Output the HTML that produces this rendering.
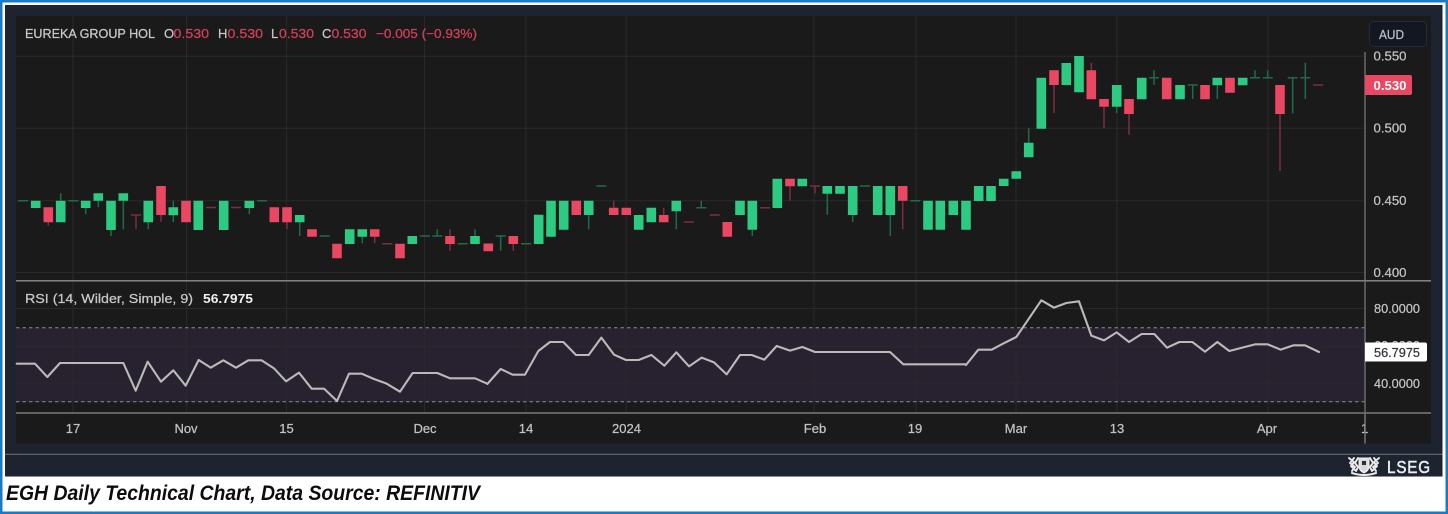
<!DOCTYPE html>
<html>
<head>
<meta charset="utf-8">
<style>
html,body{margin:0;padding:0;width:1448px;height:514px;overflow:hidden;background:#fff}
svg{display:block}
text{font-family:"Liberation Sans",sans-serif}
.w{stroke:currentColor;stroke-width:.25px}
</style>
</head>
<body>
<svg width="1448" height="514" viewBox="0 0 1448 514" xmlns="http://www.w3.org/2000/svg">
<rect width="1448" height="514" fill="#fff"/>
<rect x="1.25" y="1.25" width="1445.5" height="511.5" fill="none" stroke="#1a7ac6" stroke-width="2.5"/>
<g style="filter:blur(.35px)">
<rect x="5" y="5" width="1437.5" height="471.5" fill="#1e2330"/>
<rect x="5" y="476" width="1437.5" height="1" fill="#8a8d94"/>
<rect x="16" y="16" width="1415" height="427.5" fill="#1a1a1a"/>
<rect x="5" y="453.7" width="1437.5" height="1.3" fill="#5d616b"/>
<!-- RSI band -->
<rect x="16" y="328" width="1349" height="74" fill="#282130"/>
<!-- grid -->
<path d="M73 16V413M186.5 16V413M286.5 16V413M424.5 16V413M526 16V413M626 16V413M814 16V413M916 16V413M1016 16V413M1117 16V413M1268 16V413M16 56.3H1365M16 128.3H1365M16 200.7H1365M16 272.5H1365M16 308.5H1365M16 346.5H1365M16 383H1365" stroke="#292929" stroke-width="1" fill="none"/>
<path d="M16 327.7H1365M16 401.7H1365" stroke="#8e8b92" stroke-width="1" stroke-dasharray="3.5 3" fill="none"/>
<path d="M16 280.8H1431M16 413H1431" stroke="#8e8e8e" stroke-width="1.3" fill="none"/>
<path d="M1365 52V443.5" stroke="#777" stroke-width="1.3" fill="none"/>

<!-- wicks -->
<path fill="none" stroke="#1f6a4a" stroke-width="1.5" d="M60.7 193.3V200.7M85.7 208V214.3M98.3 200.7V207.3M111 230V236M123.3 200.7V229.3M148.3 222V229.3M173.3 200.7V222M249.3 208V214.3M299.7 222V236M362.3 236V243.3M437.3 229.3V236M475 229.3V236M500.7 236V250.7M701.3 200.7V207.7M1154 70.3V85M1192.7 85V99M1255 70.3V77.7M1267.7 70.3V77.7M1292.7 77.7V113.3M1305.3 62.7V99M588.7 215V229.3M676.3 211V229.3M752.3 229.7V236M827.3 193.7V214.7M852.7 215V222M890.3 215V236M1028.7 128.3V142.7M1116.7 106.7V113.3M1217.3 85.3V99"/>
<path fill="none" stroke="#7c2d42" stroke-width="1.5" d="M48.3 222.3V225.7M136 215V229.3M161 215V222M287 222.3V229.3M374.7 236.7V243.3M450 229.3V236M450 244V250.7M513.3 244V250.7M613.7 200.7V207.7M663.7 207.7V215M790 186.3V200.7M815 186V193.3M902.7 200.7V229.3M1054 85V113.3M1091.3 62.7V70.3M1104 106.7V128.3M1129 114V134.7M1280 114V171"/>
<!-- dojis -->
<path fill="none" stroke="#1f6a4a" stroke-width="1.5" d="M18 200.7h10M68.3 200.7h10M257 200.7h10M319.7 236h10M420 236h10M432.3 236h10M457.7 243.7h10M495.7 236h10M521 243.7h10M596.3 186h10M696.3 207.7h10M860 186h10M910.3 200.7h10M1149 77.7h10M1187.7 85h10M1250 77.7h10M1262.7 77.7h10M1287.7 77.7h10M1300.3 77.7h10"/>
<path fill="none" stroke="#7c2d42" stroke-width="1.5" d="M131 215h10M206 207.5h10M231 207.5h10M382.3 243.7h10M684 222h10M709.7 215h10M760 207.7h10M810 186h10M1313 85h10"/>
<!-- green bodies -->
<path fill="none" stroke="#2dcb82" stroke-width="9.6" d="M35.7 200.7V208M60.7 200.7V222.3M85.7 200.7V208M98.3 193.3V200.7M111 200.7V230M123.3 193.3V200.7M148.3 200.7V222.3M173.3 207.3V215.3M198.3 200.7V230M223.7 200.7V230M249.3 200.7V208M299.7 215V222.3M349.7 229.3V244M362.3 229.3V236.7M412.3 236V244M475 236V244M538.7 214.7V244M551 200.7V236.7M563.7 200.7V229.7M588.7 200.7V215M638.7 215V229.7M651.3 207.7V222.3M676.3 200.7V211.3M740 200.7V215M752.3 200.7V229.7M777.3 178.7V208M802.3 178.7V186.3M827.3 186V193.7M840 186V193.7M852.7 186V215M877.7 186V215M890.3 186V215M928 200.7V229.7M940.3 200.7V229.7M953.3 200.7V215M966 200.7V229.7M978.7 186V201M991 186V201M1003.7 178.7V186M1016.3 171.3V178.7M1028.7 142.7V157.3M1041.3 77.7V128.7M1066.3 63V85M1079 56V92.3M1116.7 85V106.7M1141.7 77.7V99.3M1180 85V99.3M1217.3 77.7V85.3M1242.7 77.7V85.3"/>
<!-- red bodies -->
<path fill="none" stroke="#ea4763" stroke-width="9.6" d="M48.3 207.3V222.3M161 186V215M186 200.7V222.3M274.3 207.3V222.3M287 207.3V222.3M312 229.3V236.7M337 243.7V258.3M374.7 229.3V236.7M400 243.7V258.3M450 236V244M488.3 243.5V251.3M513.3 236V244M576.3 200.7V215M613.7 207.7V215M626.3 207.7V215M663.7 215V222.3M727.3 222V236.7M790 178.7V186.3M902.7 186V200.7M1054 70.3V85M1091.3 70.3V99.3M1104 99V106.7M1129 99V114M1166.7 77.7V99.3M1205 85V99.3M1230 77.7V92.7M1280 85V114"/>

<!-- RSI line -->
<g fill="none" stroke="#bababa" stroke-width="6.3" stroke-linejoin="round" stroke-linecap="round">
<path transform="translate(0,275) scale(.33333)" d="M50 266L105 266L142 306L180 264L370 264L407 347L443 260L483 320L520 286L557 332L596 255L632 278L670 256L708 278L745 256L785 256L822 280L858 319L897 293L935 341L972 341L1011 378L1047 296L1085 296L1122 312L1160 326L1200 350L1238 294L1312 294L1350 310L1425 310L1462 326"/>
<path transform="translate(480,275) scale(.33333)" d="M22 327L62 282L98 299L135 299L175 228L210 201L250 201L288 240L326 240L364 188L402 239L438 255L476 255L514 240L553 272L589 232L627 274L665 248L702 262L740 298L780 240L815 240L853 254L890 213L930 227L967 216L1005 231L1230 231L1270 268L1455 268"/>
<path transform="translate(960,275) scale(.33333)" d="M15 268L18 270L55 224L95 224L131 205L169 186L244 76L282 98L319 84L357 79L394 182L432 196L470 172L507 201L545 177L583 177L621 218L658 201L697 201L735 230L772 201L808 228L847 218L885 208L923 208L962 224L1000 211L1035 211L1077 231"/>
</g>

<!-- header -->
<g font-size="13">
<text class="w" x="25" y="38" fill="#c8c8c8" color="#c8c8c8" textLength="130" lengthAdjust="spacingAndGlyphs">EUREKA GROUP HOL</text>
<text class="w" x="164" y="38" fill="#c8c8c8" color="#c8c8c8">O</text><text class="w" x="173.500" y="38" fill="#cf405a" color="#cf405a" textLength="35.500" lengthAdjust="spacingAndGlyphs">0.530</text>
<text class="w" x="218" y="38" fill="#c8c8c8" color="#c8c8c8">H</text><text class="w" x="227.500" y="38" fill="#cf405a" color="#cf405a" textLength="35.500" lengthAdjust="spacingAndGlyphs">0.530</text>
<text class="w" x="271" y="38" fill="#c8c8c8" color="#c8c8c8">L</text><text class="w" x="279" y="38" fill="#cf405a" color="#cf405a" textLength="35" lengthAdjust="spacingAndGlyphs">0.530</text>
<text class="w" x="322" y="38" fill="#c8c8c8" color="#c8c8c8">C</text><text class="w" x="331.500" y="38" fill="#cf405a" color="#cf405a" textLength="35" lengthAdjust="spacingAndGlyphs">0.530</text>
<text class="w" x="376" y="38" fill="#cf405a" color="#cf405a" textLength="101" lengthAdjust="spacingAndGlyphs">−0.005 (−0.93%)</text>
<text class="w" x="25" y="303" fill="#c8c8c8" color="#c8c8c8" textLength="168" lengthAdjust="spacingAndGlyphs">RSI (14, Wilder, Simple, 9)</text>
<text x="203" y="303" fill="#f0f0f0" font-weight="bold" textLength="50" lengthAdjust="spacingAndGlyphs">56.7975</text>
</g>

<!-- AUD -->
<rect x="1369.5" y="21.5" width="57" height="25" rx="4" fill="#131722" stroke="#262b38"/>
<text class="w" x="1379" y="39" font-size="13" fill="#bcbec6" color="#bcbec6" textLength="25" lengthAdjust="spacingAndGlyphs">AUD</text>

<!-- price axis -->
<g font-size="13" fill="#c2c2c2" color="#c2c2c2">
<text class="w" x="1373.5" y="60.5" textLength="33" lengthAdjust="spacingAndGlyphs">0.550</text>
<text class="w" x="1373.5" y="132.5" textLength="33" lengthAdjust="spacingAndGlyphs">0.500</text>
<text class="w" x="1373.5" y="205" textLength="33" lengthAdjust="spacingAndGlyphs">0.450</text>
<text class="w" x="1373.5" y="277" textLength="33" lengthAdjust="spacingAndGlyphs">0.400</text>
<text class="w" x="1374" y="313" textLength="46" lengthAdjust="spacingAndGlyphs">80.0000</text>
<text class="w" x="1374" y="350" textLength="46" lengthAdjust="spacingAndGlyphs">60.0000</text>
<text class="w" x="1374" y="388" textLength="46" lengthAdjust="spacingAndGlyphs">40.0000</text>
</g>
<path d="M1365 75h45a2 2 0 0 1 2 2v16a2 2 0 0 1-2 2h-45z" fill="#ea4763"/>
<text x="1373.5" y="90" font-size="13" font-weight="bold" fill="#fff" textLength="33" lengthAdjust="spacingAndGlyphs">0.530</text>
<path d="M1365 342.5h60a2 2 0 0 1 2 2v15a2 2 0 0 1-2 2h-60z" fill="#fff"/>
<text class="w" x="1374" y="357" font-size="13" fill="#33363d" color="#33363d" textLength="46" lengthAdjust="spacingAndGlyphs">56.7975</text>

<!-- time axis -->
<g font-size="13" fill="#c2c2c2" color="#c2c2c2" text-anchor="middle">
<text class="w" x="73" y="433">17</text>
<text class="w" x="186" y="433">Nov</text>
<text class="w" x="286.5" y="433">15</text>
<text class="w" x="425" y="433">Dec</text>
<text class="w" x="526" y="433">14</text>
<text class="w" x="626.500" y="433">2024</text>
<text class="w" x="815" y="433">Feb</text>
<text class="w" x="915" y="433">19</text>
<text class="w" x="1016" y="433">Mar</text>
<text class="w" x="1117" y="433">13</text>
<text class="w" x="1267" y="433">Apr</text>
</g>
<text class="w" x="1361" y="433" font-size="13" fill="#c2c2c2" color="#c2c2c2">1</text>
<path d="M1365 415V443.5" stroke="#777" stroke-width="1.3" fill="none"/>

<!-- LSEG crest -->
<g fill="none" stroke="#e8e8e8" stroke-width="2" stroke-linecap="round" stroke-linejoin="round">
<path d="M1349 458l5 4 -3 4 4 4M1354 458l-4 5 5 4 -3 4M1358 458l-3 5 3 4 -2 4"/>
<path d="M1379 458l-5 4 3 4 -4 4M1374 458l4 5 -5 4 3 4M1370 458l3 5 -3 4 2 4"/>
<path d="M1359.500 458.500h9v8q0 4-4.500 6q-4.500-2-4.500-6z" fill="#d8d8d8"/>
<path d="M1352 473q12 4 24 0"/>
</g>
<path d="M1362 461h4v4h-4z" fill="#2b2f3a"/>
<text x="1387" y="473" font-size="17.500" fill="#eceef0" stroke="#eceef0" stroke-width=".5" textLength="44" lengthAdjust="spacingAndGlyphs" letter-spacing="1">LSEG</text>
</g>

<!-- caption -->
<text x="6" y="500" font-size="21" font-weight="bold" font-style="italic" fill="#0c0c0c" textLength="474" lengthAdjust="spacingAndGlyphs">EGH Daily Technical Chart, Data Source: REFINITIV</text>
</svg>
</body>
</html>
